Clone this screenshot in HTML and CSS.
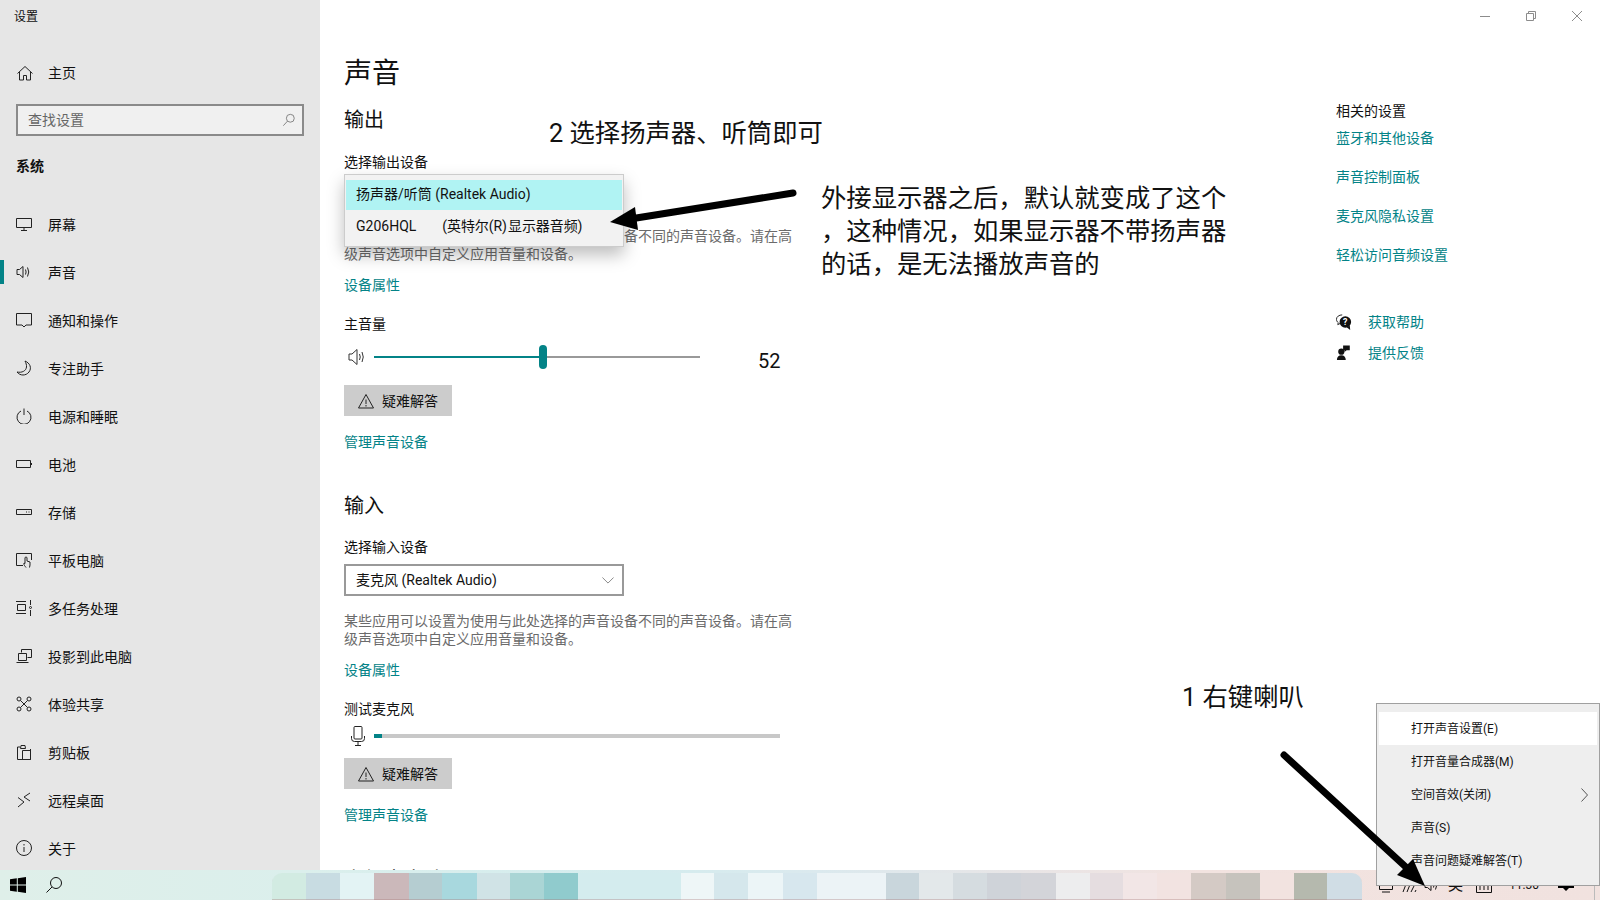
FILE: index.html
```html
<!DOCTYPE html>
<html lang="zh-CN">
<head>
    <meta charset="UTF-8">
    <title>设置</title>
    <link rel="stylesheet" href="styles.css">
</head>
<body>
    <div class="window">
        <nav class="sidebar">
            <div class="app-title">设置</div>
            <div class="home-row">
                <svg class="ic" viewBox="0 0 16 16"><path d="M.5 8.500 8 1.500l7.500 7M2.500 7v8h4v-4.500h3V15h4V7"/></svg>
                <span>主页</span>
            </div>
            <div class="search">
                <span>查找设置</span>
                <svg class="ic search-ic" viewBox="0 0 16 16"><circle cx="9.500" cy="6" r="4.500"/><path d="M6.300 9.300 1.500 14.500"/></svg>
            </div>
            <div class="group-name">系统</div>

            <div class="nav-item">
                <svg class="ic" viewBox="0 0 16 16"><path d="M.5 2.500h15v9H.5zM8 11.500V14M5 14.500h6"/></svg>
                <span>屏幕</span>
            </div>
            <div class="nav-item active">
                <svg class="ic" viewBox="0 0 16 16"><path d="M1 5.500h2.500L7 2.500v11l-3.500-3H1zM9.500 5.500q1.200 2.500 0 5M11.500 3.500q2.500 4.500 0 9"/></svg>
                <span>声音</span>
            </div>
            <div class="nav-item">
                <svg class="ic" viewBox="0 0 16 16"><path d="M.5 1.500h15V13H10l-2 2-2-2H.5z"/></svg>
                <span>通知和操作</span>
            </div>
            <div class="nav-item">
                <svg class="ic" viewBox="0 0 16 16"><path d="M9 1c5 2 7 7 4 11-3 4-9 4-12 0 5 1 9-1 9.500-5 .2-2-.5-4-1.500-6z"/></svg>
                <span>专注助手</span>
            </div>
            <div class="nav-item">
                <svg class="ic" viewBox="0 0 16 16"><path d="M5 3a7 7 0 1 0 6 0M8 .5V7"/></svg>
                <span>电源和睡眠</span>
            </div>
            <div class="nav-item">
                <svg class="ic" viewBox="0 0 16 16"><path d="M.5 4.500h14v7H.5zM15.500 7v2"/></svg>
                <span>电池</span>
            </div>
            <div class="nav-item">
                <svg class="ic" viewBox="0 0 16 16"><path d="M.5 5.500h15v5H.5zM10 8h1M12.500 8h1"/></svg>
                <span>存储</span>
            </div>
            <div class="nav-item">
                <svg class="ic" viewBox="0 0 16 16"><path d="M7 13.500H.5v-12h15V8M10 15.500c-1-1.500-2.500-2.500-2-4.500l1 .5V6a1 1 0 0 1 2 0v3l3 1v3l-.5 2.500"/></svg>
                <span>平板电脑</span>
            </div>
            <div class="nav-item">
                <svg class="ic" viewBox="0 0 16 16"><path d="M0 1.500h10M1.500 4.500h8v6h-8zM0 13.500h10M14.500 0v5M14.500 10v6"/><circle cx="14.500" cy="7.500" r="1"/></svg>
                <span>多任务处理</span>
            </div>
            <div class="nav-item">
                <svg class="ic" viewBox="0 0 16 16"><path d="M5.500 4.500v-3h10v8h-4M2.500 5.500h8v7h-8zM.5 14.500h12"/></svg>
                <span>投影到此电脑</span>
            </div>
            <div class="nav-item">
                <svg class="ic" viewBox="0 0 16 16"><circle cx="3" cy="3" r="2"/><circle cx="13" cy="3" r="2"/><circle cx="3" cy="13" r="2"/><circle cx="13" cy="13" r="2"/><path d="m4.500 4.500 7 7M11.500 4.500l-7 7"/></svg>
                <span>体验共享</span>
            </div>
            <div class="nav-item">
                <svg class="ic" viewBox="0 0 16 16"><path d="M4 3H1.500v12.500h13V5M5 1.500h4l.5 3h-5zM6.500 6.500h8v9h-8z"/></svg>
                <span>剪贴板</span>
            </div>
            <div class="nav-item">
                <svg class="ic" viewBox="0 0 16 16"><path d="m2 5.500 6 4.500-6 5M14 1 8 5l6 4"/></svg>
                <span>远程桌面</span>
            </div>
            <div class="nav-item">
                <svg class="ic" viewBox="0 0 16 16"><circle cx="8" cy="8" r="7.500"/><path d="M8 7v5M8 4v1.500"/></svg>
                <span>关于</span>
            </div>
        </nav>

        <div class="pane">
            <div class="titlebar">
                <div class="win-btn"><svg viewBox="0 0 10 10"><path d="M0 5.500h10"/></svg></div>
                <div class="win-btn"><svg viewBox="0 0 10 10"><path d="M.5 2.500h7v7h-7zM2.500 2.500v-2h7v7h-2"/></svg></div>
                <div class="win-btn"><svg viewBox="0 0 10 10"><path d="m0 0 10 10M10 0 0 10"/></svg></div>
            </div>
            <div class="pane-body">
                <main class="content">
                    <h1 class="page-title">声音</h1>

                    <h2 class="section-title first">输出</h2>
                    <div class="label mt-18">选择输出设备</div>
                    <div class="select-wrap">
                        <div class="select">
                            <span>扬声器/听筒 (Realtek Audio)</span>
                            <svg class="chev" viewBox="0 0 14 8"><path d="m.5.5 6.500 6.500 6.500-6.500"/></svg>
                        </div>
                        <div class="popup">
                            <div class="popup-item selected">扬声器/听筒 (Realtek Audio)</div>
                            <div class="popup-item">G206HQL<span class="popup-sub">(英特尔(R) 显示器音频)</span></div>
                        </div>
                    </div>
                    <p class="desc">某些应用可以设置为使用与此处选择的声音设备不同的声音设备。请在高级声音选项中自定义应用音量和设备。</p>
                    <a class="link mt-12">设备属性</a>

                    <div class="label vol-label">主音量</div>
                    <div class="volume-row">
                        <svg class="ic row-ic" viewBox="0 0 18 18"><path d="M1 6h3l5-4.500v15L4 12H1zM11.500 6q1.500 3 0 6M14 4q2.500 5 0 10"/></svg>
                        <div class="slider">
                            <div class="slider-fill"></div>
                            <div class="slider-thumb"></div>
                            <div class="slider-rest"></div>
                        </div>
                        <div class="volume-num">52</div>
                    </div>
                    <div class="trouble">
                        <svg class="ic" viewBox="0 0 16 16"><path d="M8 1.500 15.500 15H.5zM8 6.500V11M8 12v1.500"/></svg>
                        <span>疑难解答</span>
                    </div>
                    <a class="link mt-16">管理声音设备</a>

                    <h2 class="section-title input">输入</h2>
                    <div class="label in-label">选择输入设备</div>
                    <div class="select-wrap">
                        <div class="select">
                            <span>麦克风 (Realtek Audio)</span>
                            <svg class="chev" viewBox="0 0 14 8"><path d="m.5.5 6.500 6.500 6.500-6.500"/></svg>
                        </div>
                    </div>
                    <p class="desc">某些应用可以设置为使用与此处选择的声音设备不同的声音设备。请在高级声音选项中自定义应用音量和设备。</p>
                    <a class="link mt-12">设备属性</a>

                    <div class="label mic-label">测试麦克风</div>
                    <div class="mic-row">
                        <svg class="ic mic-ic" viewBox="0 0 16 20"><path d="M5 .5h6a1 1 0 0 1 1 1V12a1 1 0 0 1-1 1H5a1 1 0 0 1-1-1V1.500a1 1 0 0 1 1-1zM1.500 10v2.500a3 3 0 0 0 3 3h7a3 3 0 0 0 3-3V10M8 15.500v4M5 19.500h6"/></svg>
                        <div class="mic-bar"><div class="mic-fill"></div></div>
                    </div>
                    <div class="trouble tight">
                        <svg class="ic" viewBox="0 0 16 16"><path d="M8 1.500 15.500 15H.5zM8 6.500V11M8 12v1.500"/></svg>
                        <span>疑难解答</span>
                    </div>
                    <a class="link mt-16">管理声音设备</a>

                    <h2 class="section-title next">高级声音选项</h2>
                </main>

                <aside class="related">
                    <div class="label">相关的设置</div>
                    <a class="link rel-first">蓝牙和其他设备</a>
                    <a class="link rel-link">声音控制面板</a>
                    <a class="link rel-link">麦克风隐私设置</a>
                    <a class="link rel-link">轻松访问音频设置</a>
                    <div class="help-row help-first">
                        <svg class="help-ic" viewBox="0 0 18 18"><path class="outline" d="M7 1C3.500 1 .5 3 .5 6c0 1.500.8 2.800 2 3.700L2 12l3-1.500"/><circle cx="10.500" cy="9" r="6.500"/><path d="M12 15l4 3-.5-5z"/><text class="help-q" x="10.500" y="12.500" text-anchor="middle">?</text></svg>
                        <a class="link">获取帮助</a>
                    </div>
                    <div class="help-row help-second">
                        <svg class="help-ic" viewBox="0 0 18 18"><circle cx="6" cy="7.500" r="3.500"/><path d="M1 17c0-3.500 2-5.500 5-5.500s5 2 5 5.500zM8 .5h7.500v5.500H12l-2.500 2V6H8z"/></svg>
                        <a class="link">提供反馈</a>
                    </div>
                </aside>
            </div>
        </div>
    </div>

    <footer class="taskbar">
        <svg class="start" viewBox="0 0 16 16"><path d="M0 2.300 6.800 1.300v6.200H0zM7.800 1.200 16 0v7.500H7.800zM0 8.500h6.800v6.200L0 13.700zM7.800 8.500H16V16l-8.200-1.200z"/></svg>
        <svg class="ic task-search" viewBox="0 0 16 16"><circle cx="10" cy="6" r="5.500"/><path d="M6 10 .5 15.500"/></svg>
        <div class="tiles"></div>
        <div class="tray">
            <svg class="ic tray-box" viewBox="0 0 16 16"><path d="M1.500 1.500h13v11h-13zM1 6h14M4 15h8"/></svg>
            <svg class="ic tray-net" viewBox="0 0 16 16"><path d="M1 15 6 2M5 15l4-10M9 15l3-6M13 15l1-2"/></svg>
            <svg class="ic tray-vol" viewBox="0 0 16 16"><path d="M1 5.500h2.500L7 2.500v11l-3.500-3H1zM9.500 5.500q1.200 2.500 0 5M11.500 3.500q2.500 4.500 0 9"/></svg>
            <span class="tray-ime">英</span>
            <svg class="ic tray-kbd" viewBox="0 0 16 16"><path d="M.5.5h15v15H.5zM4 3v10M8 3v10M12 3v10"/></svg>
            <span class="tray-clock">11:30</span>
            <svg class="tray-note" viewBox="0 0 16 16"><path d="M0 1h16v10h-5l-3 3-3-3H0z"/></svg>
            <div class="show-desktop"></div>
        </div>
    </footer>

    <div class="note note-select">2 选择扬声器、听筒即可</div>
    <div class="note note-monitor">外接显示器之后，默认就变成了这个<br>，这种情况，如果显示器不带扬声器<br>的话，是无法播放声音的</div>
    <div class="note note-right">1 右键喇叭</div>

    <div class="context-menu">
        <div class="menu-item hover">打开声音设置(E)</div>
        <div class="menu-item">打开音量合成器(M)</div>
        <div class="menu-item">
            <span>空间音效(关闭)</span>
            <svg class="menu-chev" viewBox="0 0 7 14"><path d="m.5.5 6 6.500-6 6.500"/></svg>
        </div>
        <div class="menu-item">声音(S)</div>
        <div class="menu-item">声音问题疑难解答(T)</div>
    </div>

    <svg class="arrows" viewBox="0 0 1600 900">
        <path class="shaft" d="M793 193 630 219"/>
        <path class="head" d="M610 222 635 207 638 230z"/>
        <path class="shaft" d="M1284 755 1408 869"/>
        <path class="head" d="M1425 886 1397 875 1413 859z"/>
    </svg>
</body>
</html>
```

FILE: styles.css
```css
* {
    box-sizing: border-box;
}

body {
    margin: 0;
    height: 900px;
    overflow: hidden;
    position: relative;
    font-family: Roboto, "Noto Sans CJK SC", sans-serif;
    font-size: 14px;
    line-height: 20px;
    color: #111;
    background: #fff;
}

h1, h2, p {
    margin: 0;
    font-weight: normal;
}

.ic {
    width: 16px;
    height: 16px;
    flex: none;
    fill: none;
    stroke: #222;
    stroke-width: 1;
}

.window {
    display: flex;
    height: 870px;
    overflow: hidden;
}

/* left nav */
.sidebar {
    width: 320px;
    flex: none;
    background: #e6e6e6;
}

.app-title {
    height: 49px;
    padding: 7px 14px 0;
    font-size: 12px;
}

.home-row {
    display: flex;
    align-items: center;
    gap: 15px;
    height: 48px;
    padding-left: 17px;
}

.search {
    display: flex;
    align-items: center;
    justify-content: space-between;
    width: 288px;
    height: 32px;
    margin: 7px 0 0 16px;
    padding: 0 6px 0 10px;
    border: 2px solid #8a8a8a;
    background: #f0f0f0;
    color: #666;
}

.search-ic {
    stroke: #777;
    width: 14px;
    height: 14px;
}

.group-name {
    margin: 20px 0 0 16px;
    font-weight: bold;
}

.nav-item {
    display: flex;
    align-items: center;
    gap: 16px;
    height: 48px;
    padding-left: 16px;
    position: relative;
}

.nav-item span {
    padding-top: 1px;
}

.sidebar .group-name + .nav-item {
    margin-top: 24px;
}

.nav-item.active::before {
    content: "";
    position: absolute;
    left: 0;
    top: 12px;
    width: 4px;
    height: 24px;
    background: #038387;
}

/* right pane */
.pane {
    flex: 1;
    min-width: 0;
}

.titlebar {
    display: flex;
    justify-content: flex-end;
    height: 32px;
}

.win-btn {
    display: flex;
    align-items: center;
    justify-content: center;
    width: 46px;
    height: 32px;
}

.win-btn svg {
    width: 10px;
    height: 10px;
    fill: none;
    stroke: #8c8c8c;
    stroke-width: 1;
}

.pane-body {
    display: flex;
}

.content {
    flex: 1;
    padding-left: 24px;
}

.page-title {
    margin-top: 22px;
    font-size: 28px;
    line-height: 40px;
}

.section-title {
    font-size: 20px;
    line-height: 28px;
}

.section-title.first {
    margin-top: 12px;
}

.section-title.input {
    margin-top: 40px;
}

.section-title.next {
    margin-top: 41px;
}

.mt-12 {
    margin-top: 12px;
}

.mt-16 {
    margin-top: 16px;
}

.mt-18 {
    margin-top: 18px;
}

.vol-label {
    margin-top: 19px;
}

.in-label {
    margin-top: 17px;
}

.link {
    display: block;
    color: #038387;
}

.select-wrap {
    position: relative;
    width: 280px;
    margin-top: 7px;
}

.select {
    display: flex;
    align-items: center;
    justify-content: space-between;
    height: 32px;
    padding: 0 8px 0 10px;
    border: 2px solid #999;
}

.chev {
    width: 12px;
    height: 7px;
    fill: none;
    stroke: #777;
    stroke-width: 1;
}

.popup {
    position: absolute;
    left: 0;
    top: -5px;
    width: 280px;
    height: 73px;
    padding: 5px 1px 0;
    border: 1px solid #ccc;
    background: #f2f2f2;
    box-shadow: 0 8px 16px rgba(0, 0, 0, .26);
}

.popup-item {
    height: 31px;
    padding: 6px 10px 0;
}

.popup-item.selected {
    height: 30px;
    padding-top: 4px;
    background: #b0f3f3;
}

.popup-sub {
    margin-left: 26px;
    word-spacing: -2px;
    letter-spacing: -.1px;
}

.desc {
    width: 448px;
    margin-top: 16px;
    line-height: 18px;
    color: #6b6b6b;
}

.volume-row {
    display: flex;
    align-items: center;
    height: 24px;
    margin-top: 11px;
}

.row-ic {
    width: 18px;
    height: 18px;
    margin: 0 8px 0 4px;
    stroke: #333;
}

.slider {
    display: flex;
    align-items: center;
    width: 326px;
}

.slider-fill {
    width: 165px;
    height: 2px;
    background: #038387;
}

.slider-thumb {
    width: 8px;
    height: 24px;
    border-radius: 4px;
    background: #038387;
}

.slider-rest {
    flex: 1;
    height: 2px;
    background: #999;
}

.volume-num {
    margin-left: 58px;
    padding-top: 8px;
    font-size: 20px;
    line-height: 24px;
}

.trouble {
    display: flex;
    align-items: center;
    gap: 8px;
    width: 108px;
    height: 31px;
    margin-top: 16px;
    padding-left: 14px;
    background: #ccc;
}

.trouble.tight {
    margin-top: 10px;
}

.mic-label {
    margin-top: 19px;
}

.mic-row {
    display: flex;
    align-items: center;
    height: 24px;
    margin-top: 5px;
}

.mic-ic {
    width: 16px;
    height: 20px;
    margin: 0 8px 0 6px;
}

.mic-bar {
    width: 406px;
    height: 4px;
    background: #c8c8c8;
}

.mic-fill {
    width: 8px;
    height: 4px;
    background: #038387;
}

.related {
    width: 264px;
    flex: none;
    padding-top: 69px;
}

.rel-first {
    margin-top: 7px;
}

.rel-link {
    margin-top: 19px;
}

.help-row {
    display: flex;
    align-items: center;
    gap: 16px;
}

.help-first {
    margin-top: 47px;
}

.help-second {
    margin-top: 11px;
}

.help-ic {
    width: 16px;
    height: 16px;
    fill: #111;
}

.help-ic .outline {
    fill: none;
    stroke: #111;
}

.help-q {
    fill: #fff;
    font-size: 10px;
    font-weight: bold;
}

/* taskbar */
.taskbar {
    display: flex;
    align-items: center;
    height: 30px;
    position: relative;
    background: linear-gradient(to right, #dfefe9 0, #dbefec 300px, #d4ecee 640px, #dbe9ee 820px, #e8e5e6 1020px, #f2e3e0 1200px, #f1e2df 1600px);
}

.start {
    width: 16px;
    height: 16px;
    margin-left: 10px;
    fill: #000;
}

.task-search {
    margin-left: 20px;
    stroke: #111;
}

.tiles {
    width: 1090px;
    height: 27px;
    margin-left: 210px;
    align-self: flex-end;
    border-radius: 10px 10px 0 0;
    box-shadow: inset 0 -1px 0 rgba(170, 120, 120, .35);
    background: linear-gradient(to right,
        #d2ebe2 0 34px, #c8dce2 34px 68px, #e3f3f4 68px 102px, #cbb8ba 102px 137px,
        #b5cdd1 137px 170px, #a8d8de 170px 205px, #d0e3e6 205px 238px, #aad5d5 238px 272px,
        #90cbcd 272px 306px, #d4ecee 306px 409px, #eef6f7 409px 442px, #d5e7ec 442px 476px,
        #ecf5f7 476px 511px, #d7e7ee 511px 545px, #ecf3f6 545px 614px, #c9d6dc 614px 647px,
        #e3e8ea 647px 681px, #d5dce0 681px 715px, #cfd3d9 715px 749px, #d3d4d9 749px 784px,
        #ededee 784px 818px, #e5dde0 818px 851px, #f2e6e6 851px 885px, #f2e3e1 885px 919px,
        #d4cac5 919px 954px, #c6c3bd 954px 988px, #f2e3e0 988px 1022px, #b5b9ae 1022px 1055px,
        #d0dde5 1055px 1090px);
}

.tray {
    display: flex;
    align-items: center;
    height: 30px;
    margin-left: 16px;
    flex: 1;
}

.tray .ic {
    stroke: #111;
}

.tray-net {
    margin-left: 8px;
}

.tray-vol {
    margin-left: 6px;
}

.tray-ime {
    margin-left: 8px;
    font-size: 15px;
}

.tray-kbd {
    margin-left: 13px;
}

.tray-clock {
    margin-left: 17px;
    font-size: 12px;
}

.tray-note {
    width: 16px;
    height: 16px;
    margin-left: 19px;
    fill: #000;
}

.show-desktop {
    width: 1px;
    height: 30px;
    margin-left: 20px;
    background: #bbb;
}

/* notes written on top of the screenshot */
.note {
    position: absolute;
    font-size: 25.33px;
    line-height: 33px;
    color: #111;
    white-space: nowrap;
}

.note-select {
    left: 549px;
    top: 117px;
}

.note-monitor {
    left: 821px;
    top: 182px;
}

.note-right {
    left: 1182px;
    top: 681px;
}

.context-menu {
    position: absolute;
    left: 1376px;
    top: 703px;
    width: 224px;
    height: 183px;
    padding: 8px 2px;
    border: 1px solid #a0a0a0;
    background: #eee;
    font-size: 12px;
}

.menu-item {
    display: flex;
    align-items: center;
    justify-content: space-between;
    height: 33px;
    padding: 0 9px 0 32px;
}

.menu-item.hover {
    background: #fff;
}

.menu-chev {
    width: 7px;
    height: 14px;
    fill: none;
    stroke: #555;
    stroke-width: 1;
}

.arrows {
    position: absolute;
    left: 0;
    top: 0;
    width: 1600px;
    height: 900px;
    pointer-events: none;
}

.arrows .shaft {
    fill: none;
    stroke: #000;
    stroke-width: 7;
    stroke-linecap: round;
}

.arrows .head {
    fill: #000;
}
```
